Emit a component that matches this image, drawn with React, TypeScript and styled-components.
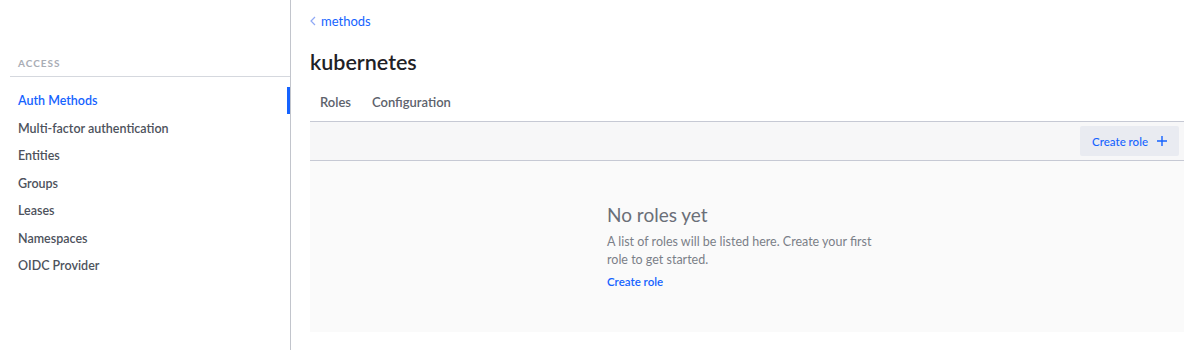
import React from "react";
import styled, { createGlobalStyle } from "styled-components";

const GlobalStyle = createGlobalStyle`
  html, body {
    margin: 0;
    padding: 0;
    background: #ffffff;
    font-family: Lato, "Noto Sans", sans-serif;
  }
`;

const Layout = styled.div`
  display: flex;
  height: 350px;
`;

const Sidebar = styled.nav`
  width: 290px;
  flex-shrink: 0;
  border-right: 1px solid #c2c5cc;
  padding-top: 57px;
  box-sizing: content-box;
`;

const SectionLabel = styled.div`
  margin-left: 10px;
  padding: 0 0 7px 8px;
  font-size: 10px;
  font-weight: 700;
  letter-spacing: 1px;
  color: #a9adb5;
  border-bottom: 1px solid #d5d8de;
`;

const NavList = styled.ul`
  list-style: none;
  margin: 0;
  padding: 10px 0 0;
`;

const NavItem = styled.li<{ $active?: boolean }>`
  position: relative;
  height: 27.5px;
  display: flex;
  align-items: center;
  padding-left: 18px;
  font-size: 12.5px;
  font-weight: 600;
  color: ${(p) => (p.$active ? "#1563ff" : "#4d525c")};

  &::after {
    content: "";
    display: ${(p) => (p.$active ? "block" : "none")};
    position: absolute;
    right: 0;
    top: 0;
    width: 3px;
    height: 27px;
    background: #1563ff;
  }
`;

const Main = styled.main`
  flex: 1;
  padding: 11px 16px 0 19px;
  display: flex;
  flex-direction: column;
`;

const Breadcrumb = styled.a`
  display: flex;
  align-items: center;
  gap: 5px;
  font-size: 13px;
  color: #1563ff;
  height: 20px;
  text-decoration: none;
`;

const Title = styled.h1`
  margin: 16px 0 0;
  font-size: 21.5px;
  font-weight: 600;
  color: #1f2126;
  line-height: 30px;
`;

const Tabs = styled.div`
  display: flex;
  gap: 21px;
  padding-left: 10px;
  margin-top: 5px;
  height: 39px;
  align-items: center;
`;

const Tab = styled.span`
  font-size: 13px;
  font-weight: 600;
  color: #5d626c;
`;

const Toolbar = styled.div`
  display: flex;
  justify-content: flex-end;
  align-items: center;
  height: 38px;
  padding-right: 5px;
  background: #f7f7f8;
  border-top: 1px solid #c6c9d4;
  border-bottom: 1px solid #c6c9d4;
`;

const ToolbarButton = styled.button`
  display: flex;
  align-items: center;
  gap: 9px;
  height: 30px;
  padding: 0 12px;
  border: none;
  border-radius: 2px;
  background: #e9ebf1;
  color: #1563ff;
  font-family: inherit;
  font-size: 11.5px;
  font-weight: 500;
`;

const EmptyState = styled.section`
  height: 171px;
  background: #fafafa;
  display: flex;
  justify-content: center;
`;

const EmptyBody = styled.div`
  width: 280px;
  padding-top: 40px;
`;

const EmptyTitle = styled.h2`
  margin: 0;
  font-size: 19px;
  font-weight: 400;
  color: #6a6f78;
  line-height: 28px;
`;

const EmptyText = styled.p`
  margin: 4px 0 0;
  font-size: 12.5px;
  line-height: 18px;
  color: #7a7f88;
`;

const EmptyLink = styled.a`
  display: block;
  margin-top: 6px;
  font-size: 11.5px;
  font-weight: 600;
  color: #1563ff;
  text-decoration: none;
`;

const navItems = [
  "Auth Methods",
  "Multi-factor authentication",
  "Entities",
  "Groups",
  "Leases",
  "Namespaces",
  "OIDC Provider",
];

const App = () => {
  return (
    <>
      <GlobalStyle />
      <Layout>
        <Sidebar>
          <SectionLabel>ACCESS</SectionLabel>
          <NavList>
            {navItems.map((item, i) => (
              <NavItem key={item} $active={i === 0}>
                {item}
              </NavItem>
            ))}
          </NavList>
        </Sidebar>
        <Main>
          <Breadcrumb href="#">
            <svg width="6" height="10" viewBox="0 0 6 10" fill="none">
              <path d="M5 1L1 5l4 4" stroke="#8fa9f5" strokeWidth="1.2" />
            </svg>
            methods
          </Breadcrumb>
          <Title>kubernetes</Title>
          <Tabs>
            <Tab>Roles</Tab>
            <Tab>Configuration</Tab>
          </Tabs>
          <Toolbar>
            <ToolbarButton>
              Create role
              <svg width="10" height="10" viewBox="0 0 10 10">
                <path d="M5 0v10M0 5h10" stroke="#1563ff" strokeWidth="1.4" />
              </svg>
            </ToolbarButton>
          </Toolbar>
          <EmptyState>
            <EmptyBody>
              <EmptyTitle>No roles yet</EmptyTitle>
              <EmptyText>
                A list of roles will be listed here. Create your first role to
                get started.
              </EmptyText>
              <EmptyLink href="#">Create role</EmptyLink>
            </EmptyBody>
          </EmptyState>
        </Main>
      </Layout>
    </>
  );
};

export default App;
